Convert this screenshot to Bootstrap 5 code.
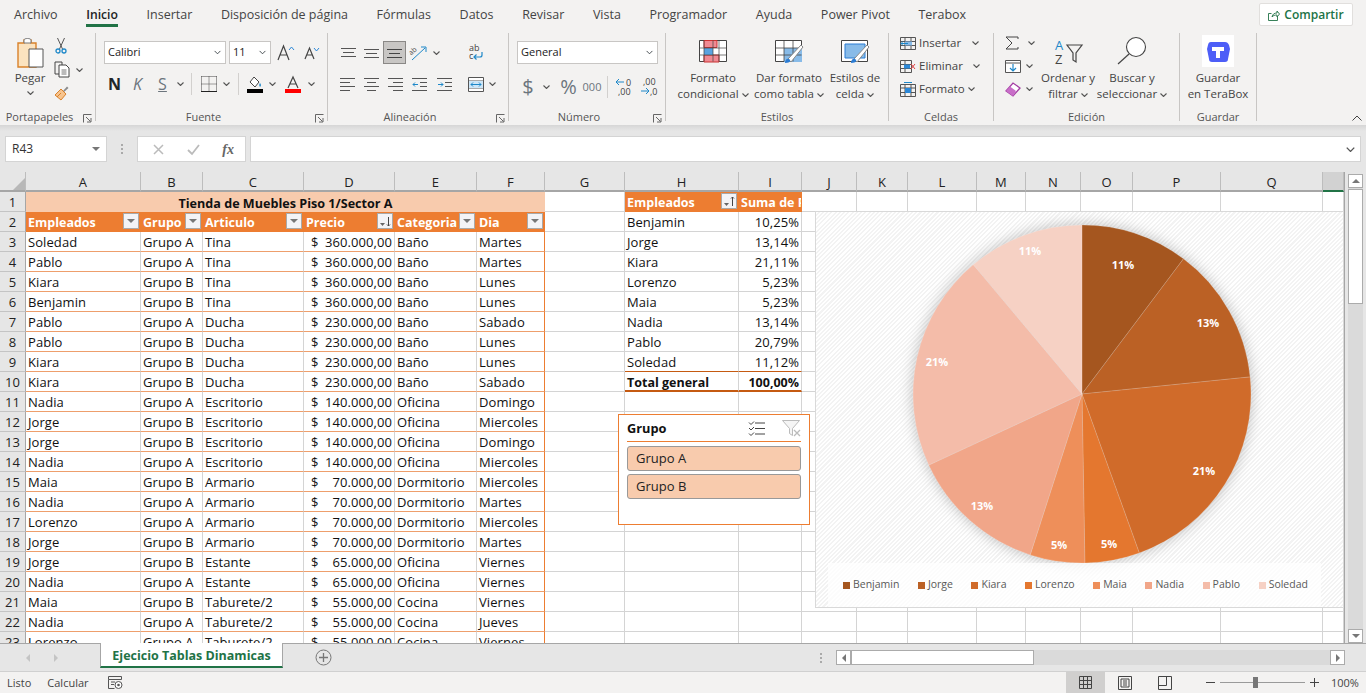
<!DOCTYPE html>
<html lang="es">
  <head>
    <meta charset="UTF-8" />
    <meta name="viewport" content="width=device-width, initial-scale=1.0" />
    <title>Ejecicio Tablas Dinamicas - Excel</title>
    <link rel="stylesheet" href="https://cdn.jsdelivr.net/npm/bootstrap@5.3.0/dist/css/bootstrap.min.css" />
    <style>
      html, body { height: 693px; overflow: hidden; }
      body { background: #f3f2f1; font-family: "Open Sans", "Noto Sans", sans-serif; font-size: 11px; color: #333; }
      svg { display: block; flex: none; overflow: visible; }

      /* tabs */
      .tabbar { height: 28px; padding-left: 14px; }
      .tabbar .nav { gap: 28.6px; flex-wrap: nowrap; }
      .tabbar .nav-link { padding: 0; height: 28px; line-height: 29px; font-size: 12.5px; color: #444; border-radius: 0; white-space: nowrap; }
      .tabbar .nav-link.active { color: #222; font-weight: 600; font-size: 12.2px; position: relative; }
      .tabbar .nav-link.active::after { content: ""; position: absolute; left: 0; right: 0; top: 24px; height: 3px; background: #217346; }
      .share-btn { margin: 3px 13px 0 0; width: 94px; height: 23px; padding: 0; font-size: 12px; font-weight: 600; color: #217346; background: #fff; border: 1px solid #e1dfdd; border-radius: 2px; }

      /* ribbon */
      .ribbon { height: 97px; padding-top: 5px; }
      .rb-group { height: 88px; flex: none; position: relative; border-right: 1px solid #c8c6c4; }
      .rb-body { height: 76px; }
      .rb-label { height: 12px; line-height: 16px; text-align: center; font-size: 11px; color: #555; white-space: nowrap; }
      .rb-label.with-launch { padding-right: 16px; }
      .launcher { position: absolute; right: 3px; bottom: -2px; }
      .w-porta { width: 96px; } .w-fuente { width: 232px; } .w-alinea { width: 181px; } .w-numero { width: 157px; }
      .w-estilos { width: 223px; } .w-celdas { width: 105px; } .w-edicion { width: 186px; } .w-guardar { width: 77px; }
      .cellx { display: flex; align-items: center; justify-content: center; }
      .rb-select { height: 23px; padding: 0 14px 0 3px; font-family: "Open Sans", sans-serif; font-size: 11px; color: #222; border: 1px solid #c8c6c4; border-radius: 0; background-size: 9px 7px; background-position: right 3px center; }
      .rb-row { display: grid; height: 24px; }
      .big-btn { text-align: center; line-height: 16px; white-space: nowrap; color: #444; font-size: 11.5px; }
      .big-btn .bigico { margin: 0 auto 6px; }
      .v-sep { width: 1px; height: 22px; background: #d2d0ce; }
      .hl-cell { background: #c8c6c4; border: 1px solid #8a8886; }

      .porta-wrap { padding: 4px 0 0 13px; }
      .porta-side { padding: 0 0 0 7px; gap: 7px; }
      .porta-cut { padding-left: 1px; }
      .porta-copy { gap: 5px; }
      .paste-col { width: 34px; line-height: 14px; font-size: 11.5px; color: #444; }
      .paste-col span { margin: 2px 0 6px; }

      .fu-body { padding: 8px 0 0 8px; }
      .fu-r1 { grid-template-columns: 122px 3px 42px 6px 18px 8px 18px; height: 23px; margin-bottom: 8px; }
      .fu-r2 { grid-template-columns: 21px 25px 25px 11px 11px 23px 12px 12px 22px 13px 28px 9px; }
      .al-body { padding: 8px 0 0 8px; }
      .al-r1 { grid-template-columns: 24px 23px 23px 25px 10px 21px 28px; height: 23px; margin-bottom: 8px; }
      .al-r2 { grid-template-columns: 23px 24px 24px 25px 24px 6px 27px 6px; }
      .nu-body { padding: 8px 0 0 8px; }
      .nu-body .rb-select { width: 141px; margin-bottom: 8px; }
      .nu-r2 { grid-template-columns: 22px 15px 3px 23px 24px 6px 26px 25px; }
      .icon-num { font-size: 9px; fill: #444; }

      .es-body { padding: 7px 0 0 9px; }
      .es-1 { width: 76px; } .es-2 { width: 76px; } .es-3 { width: 56px; }
      .ce-body { padding: 0 0 0 11px; gap: 3px; font-size: 11.5px; color: #444; }
      .ce-row { height: 20px; gap: 3px; }
      .ce-chv1 { margin-left: 8px; } .ce-chv2 { margin-left: 7px; }
      .ed-body { padding-left: 11px; }
      .ed-small { width: 34px; gap: 3px; }
      .ed-row { height: 20px; gap: 5px; }
      .ed-big1 { width: 54px; padding-top: 5px; margin-left: 2px; }
      .ed-big2 { width: 74px; padding-top: 4px; }
      .ed-big2 .bigico { margin-bottom: 5px; }
      .gu-body { padding-top: 2px; }
      .gu-body .bigico { margin-bottom: 3px; }
      .collapse-rb { position: absolute; right: 4px; top: 87px; }

      /* formula bar */
      .fbar { height: 47px; padding: 11px 5px 10px 5px; background: linear-gradient(#d6d6d6, #e6e6e6 6px); }
      .fb-box { height: 26px; background: #fff; border: 1px solid #d4d4d4; }
      .fb-name { width: 102px; padding: 0 6px; font-size: 12px; }
      .fb-dots { width: 30px; }
      .fb-fn { width: 109px; margin-right: 4px; padding: 0 11px 0 11px; }
      .fb-input { padding-right: 5px; }
      .fx-mark { font-family: "Liberation Serif", serif; font-style: italic; font-weight: 700; font-size: 14px; color: #666; }

      /* sheet */
      .sheet-wrap { height: 471px; background: #e6e6e6; }
      .sheet { width: 1345px; height: 471px; overflow: hidden; position: relative; border-right: 1px solid #a6a6a6; background: #fff; }
      .xl { border-collapse: separate; border-spacing: 0; table-layout: fixed; width: 1344px; font-size: 13px; letter-spacing: .08px; color: #111; }
      .xl td, .xl th { height: 20px; padding: 2px 2px 0; border-right: 1px solid #d4d4d4; border-bottom: 1px solid #d4d4d4; white-space: nowrap; overflow: hidden; font-weight: 400; line-height: 17px; position: relative; }
      .xl thead th { background: #e6e6e6; text-align: center; font-weight: 400; color: #222; border-right-color: #bdbdbd; border-bottom: 2px solid #a6a6a6; height: 20px; line-height: 16px; }
      .xl th.rowh { background: #e6e6e6; text-align: center; color: #222; border-right: 1px solid #a6a6a6; border-bottom-color: #c4c4c4; }
      .xl thead th.active-col { background: #d2d2d2; border-bottom-color: #217346; }
      .xl td.title { background: #f8cbad; font-weight: 700; font-size: 12.6px; letter-spacing: 0; text-align: center; border-right: 0; border-bottom: 0; }
      .xl td.hd { background: #ed7d31; color: #fff; font-weight: 700; font-size: 12.5px; letter-spacing: 0; border-right-color: #ed7d31; border-bottom-color: #ed7d31; }
      .xl td.hd-wide { padding-right: 0; }
      .xl td.dt { border-bottom-color: #ee9f6c; }
      .xl td.dt-end { border-right-color: #ed7d31; }
      .xl td.num { text-align: right; }
      .xl td.tot { font-weight: 700; font-size: 12.5px; letter-spacing: 0; padding-top: 3px; line-height: 15px; border-bottom: 2px solid #c55a11; }
      .xl td.tot-top { border-bottom-color: #c55a11; }
      .money { display: flex; justify-content: space-between; padding: 0 0 0 5px; }
      .ft-btn { position: absolute; right: 1px; top: 1px; width: 16px; height: 16px; background: #f3f3f6; border: 1px solid #a9a9a9; display: flex; align-items: center; justify-content: center; }

      /* slicer */
      .slicer { position: absolute; left: 618px; top: 242px; width: 192px; height: 111px; background: #fff; border: 1px solid #ed7d31; padding: 0 8px; }
      .sl-head { height: 27px; padding-top: 1px; border-bottom: 1px solid #ed7d31; margin-bottom: 4px; font-size: 12.8px; font-weight: 700; color: #111; }
      .sl-item { height: 25px; margin-bottom: 3px; padding-left: 8px; line-height: 23px; font-size: 13px; background: #f8cbad; border: 1px solid #999; border-radius: 3px; color: #222; }

      /* chart */
      .chart { position: absolute; left: 815px; top: 39px; width: 529px; height: 397px; border: 1px solid #d9d9d9; background: repeating-linear-gradient(135deg, #fff 0 1.5px, #f3f3f3 1.5px 3px); }
      .chart text { font-family: "Open Sans", sans-serif; font-size: 11px; font-weight: 700; fill: #fff; }
      .legend { width: 493px; height: 44px; margin-left: 12px; padding: 0 13px 0 15px; background: rgba(255,255,255,.72); color: #595959; font-size: 10.5px; }
      .sw { width: 7px; height: 7px; margin-right: 3px; }

      /* scrollbars */
      .vscroll { width: 21px; padding: 2px 3px 0 3px; }
      .sb-track { background: #dadada; height: 100%; }
      .sb-btn { background: #fff; border: 1px solid #ababab; height: 14px; display: flex; align-items: center; justify-content: center; }
      .v-thumb { height: 115px; margin-top: 1px; background: #fff; border: 1px solid #ababab; }

      /* sheet tabs */
      .tabsbar { height: 28px; background: #e6e6e6; border-top: 1px solid #a6a6a6; }
      .nav-arrows { width: 100px; gap: 24px; padding-left: 26px; }
      .sheet-tab { width: 183px; height: 25px; line-height: 26px; margin-top: -1px; text-align: center; background: #fff; color: #217346; font-size: 12.5px; font-weight: 700; border: 1px solid #a6a6a6; border-top: 0; border-bottom: 2px solid #217346; }
      .add-sheet { margin-left: 32px; }
      .h-dots { margin-left: 473px; width: 31px; }
      .hscroll { width: 509px; height: 15px; margin-top: 6px; background: #dadada; }
      .hscroll .sb-btn { width: 15px; height: 15px; }
      .h-thumb { width: 183px; height: 15px; background: #fff; border: 1px solid #ababab; }

      /* status bar */
      .status { height: 22px; border-top: 1px solid #d0d0d0; color: #444; font-size: 11px; padding-left: 7px; }
      .status > span { padding-top: 2px; }
      .st-calc { margin-left: 16px; margin-right: 19px; }
      .view-on { width: 39px; height: 21px; background: #d0cfce; }
      .view-btn { width: 40px; height: 21px; }
      .view-first { margin-left: auto; }
      .zoom-tr { width: 85px; height: 1px; background: #9a9a9a; position: relative; margin: 0 5px; }
      .zoom-th { position: absolute; left: 33px; top: -5px; width: 5px; height: 11px; background: #777; }
      .zoom-txt { width: 47px; padding: 2px 0 0 12px; }
      .zoom-zone { padding-left: 21px; }
    </style>
  </head>
  <body>
    <svg width="0" height="0" class="position-absolute">
      <symbol id="chv" viewBox="0 0 7 4"><path d="M.5.5l3 3 3-3" fill="none" stroke="#555" stroke-width="1.1" /></symbol>
      <symbol id="launch" viewBox="0 0 9 9"><path d="M.5 8.5v-8h8M3 3l4.5 4.5M4 8h4V4" fill="none" stroke="#666" /></symbol>
      <symbol id="tri" viewBox="0 0 8 4"><path d="M0 0h8L4 4z" fill="#777" /></symbol>
    </svg>

    <!-- menu tabs -->
    <div class="tabbar d-flex justify-content-between">
      <ul class="nav">
        <li class="nav-item"><a class="nav-link" href="#">Archivo</a></li>
        <li class="nav-item"><a class="nav-link active" href="#">Inicio</a></li>
        <li class="nav-item"><a class="nav-link" href="#">Insertar</a></li>
        <li class="nav-item"><a class="nav-link" href="#">Disposición de página</a></li>
        <li class="nav-item"><a class="nav-link" href="#">Fórmulas</a></li>
        <li class="nav-item"><a class="nav-link" href="#">Datos</a></li>
        <li class="nav-item"><a class="nav-link" href="#">Revisar</a></li>
        <li class="nav-item"><a class="nav-link" href="#">Vista</a></li>
        <li class="nav-item"><a class="nav-link" href="#">Programador</a></li>
        <li class="nav-item"><a class="nav-link" href="#">Ayuda</a></li>
        <li class="nav-item"><a class="nav-link" href="#">Power Pivot</a></li>
        <li class="nav-item"><a class="nav-link" href="#">Terabox</a></li>
      </ul>
      <button class="btn share-btn d-flex align-items-center justify-content-center gap-1" type="button">
        <svg width="12" height="12" viewBox="0 0 12 12"><path d="M9.5 7v4.500h-9v-7h3M4 8c.5-3 2.500-4 5-4V2l2.500 3L9 8V6C7 6 5 6.500 4 8z" fill="none" stroke="#217346" stroke-width=".9" /></svg>
        Compartir
      </button>
    </div>

    <!-- ribbon -->
    <div class="ribbon d-flex position-relative">
      <section class="rb-group w-porta">
        <div class="rb-body d-flex porta-wrap">
          <div class="paste-col d-flex flex-column align-items-center">
            <svg width="28" height="32" viewBox="0 0 28 32"><path d="M2 6h6V3h7v3h5v24H2z" fill="#fbe3bf" stroke="#d9822b" stroke-width="1.400" /><path d="M8 3c0-2 7-2 7 0v3H8z" fill="#fff" stroke="#777" /><path d="M13 12h14v18H13z" fill="#fff" stroke="#555" /></svg>
            <span>Pegar</span>
            <svg width="7" height="4"><use href="#chv" /></svg>
          </div>
          <div class="porta-side d-flex flex-column">
            <div class="porta-cut"><svg width="12" height="17" viewBox="0 0 12 17"><path d="M2.500 1l5 11M9.500 1l-5 11" stroke="#555" fill="none" /><circle cx="3" cy="14" r="2" fill="none" stroke="#1e88c9" stroke-width="1.300" /><circle cx="9" cy="14" r="2" fill="none" stroke="#1e88c9" stroke-width="1.300" /></svg></div>
            <div class="porta-copy d-flex align-items-center"><svg width="17" height="17" viewBox="0 0 17 17"><path d="M1 1h7v3M1 1v12h4" fill="none" stroke="#444" /><path d="M5 4h7l3 3v9H5z" fill="#fff" stroke="#444" /><path d="M7.500 9h5M7.500 11h5M7.500 13h5" stroke="#777" /></svg><svg width="7" height="4"><use href="#chv" /></svg></div>
            <svg width="16" height="16" viewBox="0 0 16 16"><path d="M9 6l4-4.500 1.500 1.500L10 7z" fill="#8a8a8a" /><path d="M7 4l5 5-5 6-6-5z" fill="#f7c48e" stroke="#d9822b" /><path d="M3 12l4-4" stroke="#d9822b" /></svg>
          </div>
        </div>
        <div class="rb-label with-launch">Portapapeles</div>
        <svg class="launcher" width="9" height="9"><use href="#launch" /></svg>
      </section>

      <section class="rb-group w-fuente">
        <div class="rb-body fu-body">
          <div class="rb-row fu-r1">
            <select class="form-select rb-select"><option>Calibri</option></select><i></i>
            <select class="form-select rb-select"><option>11</option></select><i></i>
            <div class="cellx"><svg width="18" height="16" viewBox="0 0 18 16"><path d="M1 15L6.500 1 12 15M3 10h7" fill="none" stroke="#444" stroke-width="1.200" /><path d="M12 5l2.500-3L17 5" fill="none" stroke="#2b88d8" /></svg></div><i></i>
            <div class="cellx"><svg width="16" height="14" viewBox="0 0 16 14"><path d="M1 13L5.500 2 10 13M2.500 9h6" fill="none" stroke="#444" stroke-width="1.200" /><path d="M10 2l2.500 3L15 2" fill="none" stroke="#2b88d8" /></svg></div>
          </div>
          <div class="rb-row fu-r2">
            <div class="cellx fw-bold fs-6 text-dark">N</div>
            <div class="cellx fst-italic text-secondary fs-6">K</div>
            <div class="cellx text-decoration-underline text-secondary fs-6">S</div>
            <div class="cellx"><svg width="7" height="4"><use href="#chv" /></svg></div>
            <div class="cellx"><div class="v-sep"></div></div>
            <div class="cellx"><svg width="16" height="16" viewBox="0 0 16 16"><path d="M.5.5h15M.5 15.500h15M.5.5v15M15.500.5v15M8 .5v15M.5 8h15" stroke="#444" stroke-dasharray="1 1" fill="none" /><path d="M0 15.500h16" stroke="#222" /></svg></div>
            <div class="cellx"><svg width="7" height="4"><use href="#chv" /></svg></div>
            <div class="cellx"><div class="v-sep"></div></div>
            <div class="cellx"><svg width="16" height="17" viewBox="0 0 16 17"><path d="M7 1l5 5-4 5-5-5z" fill="#fff" stroke="#444" /><path d="M13 7c1 1.500 1.500 2.500 0 4-1-1.500-1-2.500 0-4z" fill="#1e88c9" /><path d="M0 13h16v4H0z" fill="#000" /></svg></div>
            <div class="cellx"><svg width="7" height="4"><use href="#chv" /></svg></div>
            <div class="cellx"><svg width="16" height="17" viewBox="0 0 16 17"><path d="M3 12L8 1l5 11M5 8h6" fill="none" stroke="#444" stroke-width="1.200" /><path d="M0 13h16v4H0z" fill="#f00" /></svg></div>
            <div class="cellx"><svg width="7" height="4"><use href="#chv" /></svg></div>
          </div>
        </div>
        <div class="rb-label with-launch">Fuente</div>
        <svg class="launcher" width="9" height="9"><use href="#launch" /></svg>
      </section>

      <section class="rb-group w-alinea">
        <div class="rb-body al-body">
          <div class="rb-row al-r1">
            <div class="cellx"><svg width="15" height="10" viewBox="0 0 15 10"><path d="M0 .5h15M2 4.500h11M0 8.500h15" stroke="#555" /></svg></div>
            <div class="cellx"><svg width="15" height="10" viewBox="0 0 15 10"><path d="M0 1.500h15M2 5.500h11M0 9.500h15" stroke="#555" /></svg></div>
            <div class="cellx hl-cell"><svg width="15" height="10" viewBox="0 0 15 10"><path d="M0 1.500h15M2 5.500h11M0 9.500h15" stroke="#444" /></svg></div>
            <div class="cellx"><svg width="17" height="16" viewBox="0 0 17 16"><path d="M2 15L15 3M11 2h5v5" fill="none" stroke="#1e88c9" /><text x="0" y="8" font-size="7" fill="#444" transform="rotate(-40 4 8)">ab</text></svg></div>
            <div class="cellx"><svg width="7" height="4"><use href="#chv" /></svg></div>
            <i></i>
            <div class="cellx"><svg width="16" height="17" viewBox="0 0 16 17"><text x="1" y="7" font-size="9" fill="#444">ab</text><text x="1" y="15" font-size="9" fill="#444">c</text><path d="M14 8v3a2 2 0 0 1-2 2H6M8.500 10.500L6 13l2.500 2.500" fill="none" stroke="#1e88c9" stroke-width="1.200" /></svg></div>
          </div>
          <div class="rb-row al-r2">
            <div class="cellx"><svg width="15" height="13" viewBox="0 0 15 13"><path d="M0 .5h15M0 4.500h10M0 8.500h15M0 12.500h10" stroke="#555" /></svg></div>
            <div class="cellx"><svg width="15" height="13" viewBox="0 0 15 13"><path d="M0 .5h15M3 4.500h9M0 8.500h15M3 12.500h9" stroke="#555" /></svg></div>
            <div class="cellx"><svg width="15" height="13" viewBox="0 0 15 13"><path d="M0 .5h15M5 4.500h10M0 8.500h15M5 12.500h10" stroke="#555" /></svg></div>
            <div class="cellx"><svg width="15" height="13" viewBox="0 0 15 13"><path d="M0 .5h15M8 4.500h7M8 8.500h7M0 12.500h15" stroke="#555" /><path d="M6 6.500H1M3 4.500l-2 2 2 2" stroke="#1e88c9" fill="none" /></svg></div>
            <div class="cellx"><svg width="15" height="13" viewBox="0 0 15 13"><path d="M0 .5h15M8 4.500h7M8 8.500h7M0 12.500h15" stroke="#555" /><path d="M1 6.500h5M4 4.500l2 2-2 2" stroke="#1e88c9" fill="none" /></svg></div>
            <i></i>
            <div class="cellx"><svg width="16" height="15" viewBox="0 0 16 15"><path d="M.5.5h15v14H.5zM.5 4h15M.5 11h15" fill="#fff" stroke="#555" /><path d="M1 4h14v7H1z" fill="#cde6f7" /><path d="M3 7.500h10M5 5.500l-2 2 2 2M11 5.500l2 2-2 2" fill="none" stroke="#1e88c9" /></svg></div>
            <div class="cellx"><svg width="7" height="4"><use href="#chv" /></svg></div>
          </div>
        </div>
        <div class="rb-label with-launch">Alineación</div>
        <svg class="launcher" width="9" height="9"><use href="#launch" /></svg>
      </section>

      <section class="rb-group w-numero">
        <div class="rb-body nu-body">
          <select class="form-select rb-select"><option>General</option></select>
          <div class="rb-row nu-r2">
            <div class="cellx fs-5 text-secondary">$</div>
            <div class="cellx"><svg width="7" height="4"><use href="#chv" /></svg></div>
            <i></i>
            <div class="cellx fs-5 text-secondary">%</div>
            <div class="cellx text-secondary">000</div>
            <div class="cellx"><div class="v-sep"></div></div>
            <div class="cellx"><svg width="17" height="18" viewBox="0 0 17 18"><path d="M9 4H1M4 1L1 4l3 3" fill="none" stroke="#1e88c9" /><text class="icon-num" x="11" y="8">0</text><text class="icon-num" x="3" y="17">,00</text></svg></div>
            <div class="cellx"><svg width="17" height="18" viewBox="0 0 17 18"><text class="icon-num" x="3" y="7">,00</text><path d="M1 13h8M6 10l3 3-3 3" fill="none" stroke="#1e88c9" /><text class="icon-num" x="10" y="17">,0</text></svg></div>
          </div>
        </div>
        <div class="rb-label with-launch">Número</div>
        <svg class="launcher" width="9" height="9"><use href="#launch" /></svg>
      </section>

      <section class="rb-group w-estilos">
        <div class="rb-body d-flex es-body">
          <div class="big-btn es-1">
            <svg class="bigico" width="28" height="24" viewBox="0 0 28 24"><path d="M.5.5h27v21H.5z" fill="#fff" stroke="#444" /><path d="M5 .5h13v7H5zM5 15h15v7H5z" fill="#f08a93" stroke="#c33" /><path d="M5 8h9v7H5z" fill="#5aa3e0" /><path d="M.5 8h27M.5 15h27M5 .5v21M14 .5v21M20 .5v21" stroke="#444" fill="none" stroke-width=".7" /></svg>
            Formato<br />condicional <svg class="d-inline-block" width="7" height="4"><use href="#chv" /></svg>
          </div>
          <div class="big-btn es-2">
            <svg class="bigico" width="30" height="24" viewBox="0 0 30 24"><path d="M1.500.5h26v21h-26z" fill="#fff" stroke="#444" /><path d="M10 8h18v14H10z" fill="#88bbe8" /><path d="M1.500 8h26M1.500 15h26M10 .5v21M19 .5v21" stroke="#444" fill="none" stroke-width=".8" /><path d="M14 19l13-14 2 2-12 15z" fill="#fff" stroke="#888" /><path d="M11 23c0-3 2-5 4-4s2 4-4 4z" fill="#2b7cd3" /></svg>
            Dar formato<br />como tabla <svg class="d-inline-block" width="7" height="4"><use href="#chv" /></svg>
          </div>
          <div class="big-btn es-3">
            <svg class="bigico" width="30" height="24" viewBox="0 0 30 24"><path d="M1.500.5h26v21h-26z" fill="#fff" stroke="#444" /><path d="M5 4h20v14H5z" fill="#88bbe8" stroke="#2b7cd3" /><path d="M14 19l13-14 2 2-12 15z" fill="#fff" stroke="#888" /><path d="M11 23c0-3 2-5 4-4s2 4-4 4z" fill="#2b7cd3" /></svg>
            Estilos de<br />celda <svg class="d-inline-block" width="7" height="4"><use href="#chv" /></svg>
          </div>
        </div>
        <div class="rb-label">Estilos</div>
      </section>

      <section class="rb-group w-celdas">
        <div class="rb-body d-flex flex-column ce-body">
          <div class="ce-row d-flex align-items-center"><svg width="16" height="13" viewBox="0 0 16 13"><path d="M.5.5h15v12H.5zM.5 4.500h15M.5 8.500h15M5 .5v12M11 .5v12" fill="none" stroke="#555" /><path d="M5 4.500h7v4H5z" fill="#88bbe8" /><path d="M8 6.500H1M3 4.500l-2 2 2 2" fill="none" stroke="#1e88c9" /></svg>Insertar<svg class="ce-chv1" width="7" height="4"><use href="#chv" /></svg></div>
          <div class="ce-row d-flex align-items-center"><svg width="16" height="13" viewBox="0 0 16 13"><path d="M.5.5h11v12H.5zM.5 4.500h11M.5 8.500h11M5 .5v12" fill="none" stroke="#555" /><path d="M4 4.500h6v4H4z" fill="#2b88d8" /><path d="M11 4l4 5M15 4l-4 5" stroke="#e04040" /></svg>Eliminar<svg class="ce-chv2" width="7" height="4"><use href="#chv" /></svg></div>
          <div class="ce-row d-flex align-items-center"><svg width="16" height="15" viewBox="0 0 16 15"><path d="M.5 2.500h15v12H.5zM.5 6h15M.5 10.500h15M5 2.500v12M11 2.500v12" fill="none" stroke="#555" /><path d="M5 6h6v5H5z" fill="#2b88d8" /><path d="M4 .5h8" stroke="#1e88c9" /></svg>Formato<svg width="7" height="4"><use href="#chv" /></svg></div>
        </div>
        <div class="rb-label">Celdas</div>
      </section>

      <section class="rb-group w-edicion">
        <div class="rb-body d-flex ed-body">
          <div class="ed-small d-flex flex-column">
            <div class="ed-row d-flex align-items-center"><svg width="14" height="14" viewBox="0 0 14 14"><path d="M13 3V1H1l6 6-6 6h12v-2" fill="none" stroke="#444" /></svg><svg width="7" height="4" class="ms-1"><use href="#chv" /></svg></div>
            <div class="ed-row d-flex align-items-center"><svg width="16" height="13" viewBox="0 0 16 13"><path d="M.5.5h15v12H.5zM.5 3h15" fill="#fff" stroke="#555" /><path d="M8 4v7M5 8l3 3 3-3" fill="none" stroke="#1e88c9" stroke-width="1.200" /></svg><svg width="7" height="4"><use href="#chv" /></svg></div>
            <div class="ed-row d-flex align-items-center"><svg width="16" height="15" viewBox="0 0 16 15"><path d="M1 9l7-8 7 5-7 8z" fill="#fff" stroke="#a43ea4" stroke-width="1.300" /><path d="M1 9l4-4.500 6 4.500-3 5z" fill="#c86ec8" /></svg><svg width="7" height="4"><use href="#chv" /></svg></div>
          </div>
          <div class="big-btn ed-big1">
            <svg class="bigico" width="29" height="26" viewBox="0 0 29 26"><text x="1" y="12" font-size="13" fill="#1e88c9">A</text><text x="1" y="26" font-size="13" fill="#444">Z</text><path d="M13 7h15l-6 8v9l-3-2v-7z" fill="none" stroke="#444" stroke-width="1.200" /></svg>
            Ordenar y<br />filtrar <svg class="d-inline-block" width="7" height="4"><use href="#chv" /></svg>
          </div>
          <div class="big-btn ed-big2">
            <svg class="bigico" width="30" height="28" viewBox="0 0 30 28"><circle cx="19" cy="10" r="9.500" fill="#fff" stroke="#444" stroke-width="1.100" /><path d="M12 17L1 27" stroke="#444" stroke-width="1.200" /></svg>
            Buscar y<br />seleccionar <svg class="d-inline-block" width="7" height="4"><use href="#chv" /></svg>
          </div>
        </div>
        <div class="rb-label">Edición</div>
      </section>

      <section class="rb-group w-guardar">
        <div class="rb-body big-btn gu-body">
          <svg class="bigico" width="32" height="32" viewBox="0 0 32 32"><path d="M0 0h32v32H0z" fill="#fff" /><path d="M9 7h14c2 0 3 1 4 3l1 4-2 10c0 2-1 3-3 3H10c-2 0-3-1-3-3L5 14l1-4c.5-2 1-3 3-3z" fill="#4d5ef7" /><path d="M10 12h12v4h-4v7h-4v-7h-4z" fill="#fff" /></svg>
          Guardar<br />en TeraBox
        </div>
        <div class="rb-label">Guardar</div>
      </section>

      <svg class="collapse-rb" width="10" height="6" viewBox="0 0 10 6"><path d="M.5 5.500L5 1l4.500 4.500" fill="none" stroke="#444" /></svg>
    </div>

    <!-- formula bar -->
    <div class="fbar d-flex">
      <div class="fb-box fb-name d-flex align-items-center justify-content-between">R43<svg width="8" height="4"><use href="#tri" /></svg></div>
      <div class="fb-dots cellx"><svg width="2" height="10" viewBox="0 0 2 10"><path d="M0 0h2v2H0zM0 4h2v2H0zM0 8h2v2H0z" fill="#aaa" /></svg></div>
      <div class="fb-box fb-fn d-flex align-items-center justify-content-between">
        <svg width="11" height="11" viewBox="0 0 11 11" class="ms-1"><path d="M1 1l9 9M10 1l-9 9" stroke="#bbb" stroke-width="1.500" /></svg>
        <svg width="13" height="11" viewBox="0 0 13 11"><path d="M1 6l4 4 7-9" fill="none" stroke="#bbb" stroke-width="1.800" /></svg>
        <span class="fx-mark">fx</span>
      </div>
      <div class="fb-box fb-input flex-grow-1 d-flex align-items-center justify-content-end"><svg width="9" height="5"><use href="#chv" /></svg></div>
    </div>

    <!-- sheet -->
    <div class="sheet-wrap d-flex">
      <div class="sheet">
        <table class="xl" id="grid"></table>

        <div class="slicer">
          <div class="sl-head d-flex align-items-center justify-content-between">
            Grupo
            <div class="d-flex gap-3 align-items-center">
              <svg width="18" height="15" viewBox="0 0 18 15"><path d="M7 2h10M7 7.500h10M7 13h10" stroke="#444" /><path d="M1 1.500l2 2 3-3M1 7l2 2 3-3M1 12.500l2 2 3-3" fill="none" stroke="#444" /></svg>
              <svg width="19" height="17" viewBox="0 0 19 17"><path d="M.5.5h17l-7 8v7l-3-2V8.500z" fill="#f5f5f5" stroke="#bbb" /><path d="M12 10l6 6M18 10l-6 6" stroke="#bbb" stroke-width="1.300" /></svg>
            </div>
          </div>
          <div class="sl-item">Grupo A</div>
          <div class="sl-item">Grupo B</div>
        </div>

        <div class="chart d-flex flex-column">
          <svg id="pie" width="527" height="351" viewBox="0 0 527 351"></svg>
          <div class="legend d-flex justify-content-between align-items-center" id="legend"></div>
        </div>
      </div>

      <div class="vscroll">
        <div class="sb-track d-flex flex-column">
          <div class="sb-btn"><svg width="8" height="4" viewBox="0 0 8 4"><path d="M0 4h8L4 0z" fill="#777" /></svg></div>
          <div class="v-thumb"></div>
          <div class="sb-btn mt-auto"><svg width="8" height="4"><use href="#tri" /></svg></div>
        </div>
      </div>
    </div>

    <!-- sheet tabs -->
    <div class="tabsbar d-flex">
      <div class="nav-arrows d-flex align-items-center">
        <svg width="4" height="8" viewBox="0 0 4 8"><path d="M4 0v8L0 4z" fill="#c4c4c4" /></svg>
        <svg width="4" height="8" viewBox="0 0 4 8"><path d="M0 0v8l4-4z" fill="#c4c4c4" /></svg>
      </div>
      <div class="sheet-tab">Ejecicio Tablas Dinamicas</div>
      <div class="add-sheet d-flex align-items-center"><svg width="17" height="17" viewBox="0 0 17 17"><circle cx="8.500" cy="8.500" r="7.500" fill="none" stroke="#777" /><path d="M8.500 4v9M4 8.500h9" stroke="#777" stroke-width="1.300" /></svg></div>
      <div class="h-dots cellx"><svg width="2" height="10" viewBox="0 0 2 10"><path d="M0 0h2v2H0zM0 4h2v2H0zM0 8h2v2H0z" fill="#aaa" /></svg></div>
      <div class="hscroll d-flex">
        <div class="sb-btn"><svg width="4" height="8" viewBox="0 0 4 8"><path d="M4 0v8L0 4z" fill="#777" /></svg></div>
        <div class="h-thumb"></div>
        <div class="sb-btn ms-auto"><svg width="4" height="8" viewBox="0 0 4 8"><path d="M0 0v8l4-4z" fill="#777" /></svg></div>
      </div>
    </div>

    <!-- status bar -->
    <div class="status d-flex align-items-center">
      <span>Listo</span>
      <span class="st-calc">Calcular</span>
      <svg width="15" height="13" viewBox="0 0 15 13"><path d="M.5.5h13v3H.5zM.5 3.500v9h6M3 6h4M3 8.500h3" fill="none" stroke="#555" /><circle cx="10.500" cy="9" r="3.500" fill="#fff" stroke="#555" /><circle cx="10.500" cy="9" r="1.300" fill="#555" /></svg>
      <div class="view-first view-on cellx"><svg width="13" height="13" viewBox="0 0 13 13"><path d="M.5.5h12v12H.5zM4.500.5v12M8.500.5v12M.5 4.500h12M.5 8.500h12" fill="none" stroke="#444" /></svg></div>
      <div class="view-btn cellx"><svg width="14" height="14" viewBox="0 0 14 14"><path d="M.5.5h13v13H.5zM3 3h8v8H3zM5 5h4M5 7h4M5 9h4" fill="none" stroke="#444" /></svg></div>
      <div class="view-btn cellx"><svg width="14" height="14" viewBox="0 0 14 14"><path d="M.5.5h13v13H.5zM.5 9.500h8V.5" fill="none" stroke="#444" /></svg></div>
      <div class="zoom-zone d-flex align-items-center">
        <svg width="9" height="1" viewBox="0 0 9 1"><path d="M0 0h9v1H0z" fill="#444" /></svg>
        <div class="zoom-tr"><div class="zoom-th"></div></div>
        <svg width="9" height="9" viewBox="0 0 9 9"><path d="M0 4h9v1H0zM4 0h1v9H4z" fill="#444" /></svg>
        <div class="zoom-txt">100%</div>
      </div>
    </div>

    <script src="https://cdn.jsdelivr.net/npm/bootstrap@5.3.0/dist/js/bootstrap.bundle.min.js"></script>
    <script>
      const colWidths = [26, 115, 62, 101, 91, 82, 68, 80, 114, 63, 55, 51, 69, 49, 55, 52, 88, 102, 21]
      const letters = ['', 'A', 'B', 'C', 'D', 'E', 'F', 'G', 'H', 'I', 'J', 'K', 'L', 'M', 'N', 'O', 'P', 'Q', '']

      const rows = [
        ['Soledad', 'Grupo A', 'Tina', '360.000,00', 'Baño', 'Martes'],
        ['Pablo', 'Grupo A', 'Tina', '360.000,00', 'Baño', 'Martes'],
        ['Kiara', 'Grupo B', 'Tina', '360.000,00', 'Baño', 'Lunes'],
        ['Benjamin', 'Grupo B', 'Tina', '360.000,00', 'Baño', 'Lunes'],
        ['Pablo', 'Grupo A', 'Ducha', '230.000,00', 'Baño', 'Sabado'],
        ['Pablo', 'Grupo B', 'Ducha', '230.000,00', 'Baño', 'Lunes'],
        ['Kiara', 'Grupo B', 'Ducha', '230.000,00', 'Baño', 'Lunes'],
        ['Kiara', 'Grupo B', 'Ducha', '230.000,00', 'Baño', 'Sabado'],
        ['Nadia', 'Grupo A', 'Escritorio', '140.000,00', 'Oficina', 'Domingo'],
        ['Jorge', 'Grupo B', 'Escritorio', '140.000,00', 'Oficina', 'Miercoles'],
        ['Jorge', 'Grupo B', 'Escritorio', '140.000,00', 'Oficina', 'Domingo'],
        ['Nadia', 'Grupo A', 'Escritorio', '140.000,00', 'Oficina', 'Miercoles'],
        ['Maia', 'Grupo B', 'Armario', '70.000,00', 'Dormitorio', 'Miercoles'],
        ['Nadia', 'Grupo A', 'Armario', '70.000,00', 'Dormitorio', 'Martes'],
        ['Lorenzo', 'Grupo A', 'Armario', '70.000,00', 'Dormitorio', 'Miercoles'],
        ['Jorge', 'Grupo B', 'Armario', '70.000,00', 'Dormitorio', 'Martes'],
        ['Jorge', 'Grupo B', 'Estante', '65.000,00', 'Oficina', 'Viernes'],
        ['Nadia', 'Grupo A', 'Estante', '65.000,00', 'Oficina', 'Viernes'],
        ['Maia', 'Grupo B', 'Taburete/2', '55.000,00', 'Cocina', 'Viernes'],
        ['Nadia', 'Grupo A', 'Taburete/2', '55.000,00', 'Cocina', 'Jueves'],
        ['Lorenzo', 'Grupo A', 'Taburete/2', '55.000,00', 'Cocina', 'Viernes'],
      ]

      const pivot = [
        ['Benjamin', 10.25], ['Jorge', 13.14], ['Kiara', 21.11], ['Lorenzo', 5.23],
        ['Maia', 5.23], ['Nadia', 13.14], ['Pablo', 20.79], ['Soledad', 11.12],
      ]
      const pieColors = ['#a5561f', '#bb6125', '#d06b2a', '#e4772f', '#ee8f5a', '#f1a689', '#f4bca9', '#f6d1c4']
      const pieLabels = [[41, 53], [126, 111], [122, 259], [27, 332], [-23, 333], [-100, 294], [-145, 150], [-52, 39]]

      const triBtn = '<span class="ft-btn"><svg width="8" height="4"><use href="#tri" /></svg></span>'
      const sortBtn = '<span class="ft-btn"><svg width="12" height="11" viewBox="0 0 12 11"><path d="M1 7h5L3.500 10z" fill="#666" /><path d="M9.500 1v9M8 8.500L9.500 10 11 8.500" fill="none" stroke="#444" /></svg></span>'
      const sortUpBtn = '<span class="ft-btn"><svg width="12" height="11" viewBox="0 0 12 11"><path d="M1 7h5L3.500 10z" fill="#666" /><path d="M9.500 1v9M8 2.500L9.500 1 11 2.500" fill="none" stroke="#444" /></svg></span>'

      function pivotCells(r) {
        if (r === 1) return `<td class="hd">Empleados${sortUpBtn}</td><td class="hd hd-wide">Suma de Precio</td>`
        if (r >= 2 && r <= 9) {
          const p = pivot[r - 2]
          const last = r === 9 ? ' tot-top' : ''
          return `<td class="${last}">${p[0]}</td><td class="num${last}">${p[1].toFixed(2).replace('.', ',')}%</td>`
        }
        if (r === 10) return '<td class="tot">Total general</td><td class="tot num">100,00%</td>'
        return '<td></td><td></td>'
      }

      function buildGrid() {
        let html = '<colgroup>' + colWidths.map((w) => `<col width="${w}">`).join('') + '</colgroup><thead><tr>'
        letters.forEach((l, i) => {
          if (i === 0) {
            html += '<th><svg class="position-absolute bottom-0 end-0" width="12" height="12" viewBox="0 0 12 12"><path d="M12 0v12H0z" fill="#b8b8b8" /></svg></th>'
          } else {
            html += `<th${i === 18 ? ' class="active-col"' : ''}>${l}</th>`
          }
        })
        html += '</tr></thead><tbody>'
        const tail = '<td></td>'.repeat(9)
        for (let r = 1; r <= 23; r++) {
          html += `<tr><th class="rowh">${r}</th>`
          if (r === 1) {
            html += '<td colspan="6" class="title">Tienda de Muebles Piso 1/Sector A</td>'
          } else if (r === 2) {
            html += `<td class="hd">Empleados${triBtn}</td><td class="hd">Grupo${triBtn}</td><td class="hd">Articulo${triBtn}</td><td class="hd">Precio${sortBtn}</td><td class="hd">Categoria${triBtn}</td><td class="hd">Dia${triBtn}</td>`
          } else {
            const d = rows[r - 3]
            html += `<td class="dt">${d[0]}</td><td class="dt">${d[1]}</td><td class="dt">${d[2]}</td><td class="dt"><div class="money"><span>$</span><span>${d[3]}</span></div></td><td class="dt">${d[4]}</td><td class="dt dt-end">${d[5]}</td>`
          }
          html += `<td></td>${pivotCells(r)}${tail}</tr>`
        }
        document.getElementById('grid').innerHTML = html + '</tbody>'
      }

      function buildPie() {
        const cx = 266, cy = 182, R = 169
        let angle = 0
        let out = '<g style="filter: drop-shadow(0 0 7px rgba(0,0,0,.25))">'
        pivot.forEach((p, i) => {
          const a2 = angle + (p[1] / 100.01) * Math.PI * 2
          const large = a2 - angle > Math.PI ? 1 : 0
          const x1 = cx + R * Math.sin(angle), y1 = cy - R * Math.cos(angle)
          const x2 = cx + R * Math.sin(a2), y2 = cy - R * Math.cos(a2)
          out += `<path d="M${cx} ${cy}L${x1.toFixed(1)} ${y1.toFixed(1)}A${R} ${R} 0 ${large} 1 ${x2.toFixed(1)} ${y2.toFixed(1)}Z" fill="${pieColors[i]}" stroke="#fff" stroke-opacity=".15" />`
          angle = a2
        })
        out += '</g>'
        const labels = ['11%', '13%', '21%', '5%', '5%', '13%', '21%', '11%']
        pieLabels.forEach((pos, i) => {
          out += `<text x="${cx + pos[0]}" y="${pos[1] + 4}" text-anchor="middle">${labels[i]}</text>`
        })
        document.getElementById('pie').innerHTML = out
        document.getElementById('legend').innerHTML = pivot
          .map((p, i) => `<div class="d-flex align-items-center"><span class="sw" style="background:${pieColors[i]}"></span>${p[0]}</div>`)
          .join('')
      }

      buildGrid()
      buildPie()
    </script>
  </body>
</html>
